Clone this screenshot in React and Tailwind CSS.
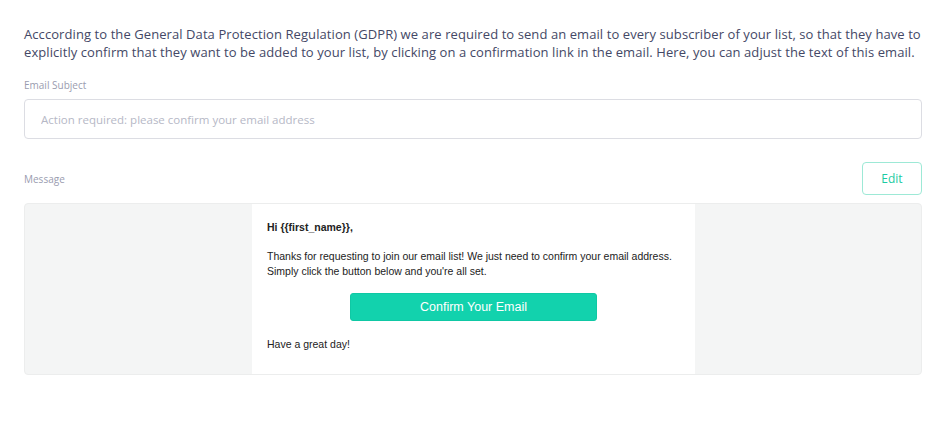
export default function App() {
  return (
    <div className="w-[950px] h-[427px] bg-white pl-6 pr-7 pt-[25px] font-['Open_Sans',sans-serif]">
      <p className="text-[13px] leading-[18px] tracking-[0.08px] text-[#444866] whitespace-nowrap">
        Acccording to the General Data Protection Regulation (GDPR) we are required to send an email to every subscriber of your list, so that they have to
        <br />
        explicitly confirm that they want to be added to your list, by clicking on a confirmation link in the email. Here, you can adjust the text of this email.
      </p>

      <div className="mt-[17px] text-[10px] leading-[14px] text-[#9a9caf]">Email Subject</div>
      <input
        className="mt-[7px] block w-full h-[40px] rounded-[4px] border border-[#dcdde3] px-4 text-[11.5px] text-[#444866] placeholder:text-[#b6b8c6] outline-none"
        placeholder="Action required: please confirm your email address"
      />

      <div className="mt-[23px] flex items-center justify-between">
        <div className="text-[10px] leading-[14px] text-[#9a9caf]">Message</div>
        <button className="w-[60px] h-[33px] rounded-[4px] border border-[#9de9d6] text-[12px] text-[#1ccba2]">
          Edit
        </button>
      </div>

      <div className="mt-[8px] h-[172px] rounded-[4px] border border-[#eceded] bg-[#f4f5f5] flex justify-center font-['Liberation_Sans',Arial,sans-serif] text-[10.5px] text-[#222]">
        <div className="w-[443px] bg-white px-[15px] pt-[16px] ml-[1px]">
          <div className="font-bold leading-[14px]">Hi {'{{first_name}}'},</div>
          <div className="mt-[15px] leading-[15px]">
            Thanks for requesting to join our email list! We just need to confirm your email address.
            <br />
            Simply click the button below and you're all set.
          </div>
          <div className="mt-[14px] flex justify-center">
            <div className="w-[247px] h-[28px] rounded-[3px] bg-[#12d2ad] border border-[#0fc8a4] flex items-center justify-center text-white text-[12.5px]">
              Confirm Your Email
            </div>
          </div>
          <div className="mt-[16px] leading-[14px]">Have a great day!</div>
        </div>
      </div>
    </div>
  );
}
